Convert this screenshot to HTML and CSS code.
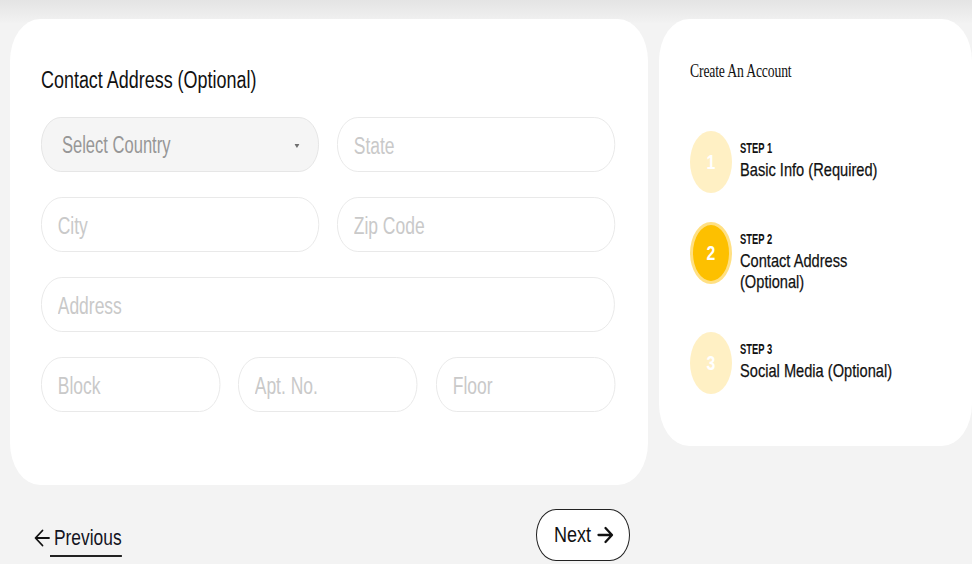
FILE: index.html
```html
<!DOCTYPE html>
<html lang="en">
<head>
<meta charset="utf-8">
<title>Contact Address</title>
<link rel="stylesheet" href="styles.css">
</head>
<body>
<div class="page">
  <div class="main-col">
    <section class="form-card">
      <h2 class="form-title">Contact Address (Optional)</h2>
      <div class="form-grid">
        <div class="row row-2">
          <div class="field select">
            <span>Select Country</span>
            <svg class="caret" width="7" height="4" viewBox="0 0 7 4"><path d="M0 0h7L3.5 4z" fill="#6f6f6f"/></svg>
          </div>
          <input class="field" type="text" placeholder="State">
        </div>
        <div class="row row-2">
          <input class="field" type="text" placeholder="City">
          <input class="field" type="text" placeholder="Zip Code">
        </div>
        <div class="row row-1">
          <input class="field" type="text" placeholder="Address">
        </div>
        <div class="row row-3">
          <input class="field" type="text" placeholder="Block">
          <input class="field" type="text" placeholder="Apt. No.">
          <input class="field" type="text" placeholder="Floor">
        </div>
      </div>
    </section>
    <nav class="wizard-nav">
      <a class="prev-link" href="#">
        <svg class="arrow" width="16" height="22" viewBox="0 0 16 22"><path d="M15 11H2M8.5 3.5L1.5 11l7 7.5" fill="none" stroke="#111" stroke-width="1.8" stroke-linecap="round" stroke-linejoin="round"/></svg>
        <span class="prev-text">Previous</span>
      </a>
      <button class="next-btn" type="button">
        <span class="next-label">Next</span>
        <svg class="arrow" width="17" height="22" viewBox="0 0 17 22"><path d="M1.5 11h13M8.5 4l6.5 7-6.5 7" fill="none" stroke="#111" stroke-width="2.3" stroke-linecap="round" stroke-linejoin="round"/></svg>
      </button>
    </nav>
  </div>
  <aside class="steps-card">
    <h3 class="steps-title">Create An Account</h3>
    <ol class="steps">
      <li class="step">
        <div class="step-dot"><span>1</span></div>
        <div class="step-text">
          <div class="step-label">STEP 1</div>
          <div class="step-name">Basic Info (Required)</div>
        </div>
      </li>
      <li class="step active">
        <div class="step-dot"><span>2</span></div>
        <div class="step-text">
          <div class="step-label">STEP 2</div>
          <div class="step-name">Contact Address (Optional)</div>
        </div>
      </li>
      <li class="step">
        <div class="step-dot"><span>3</span></div>
        <div class="step-text">
          <div class="step-label">STEP 3</div>
          <div class="step-name">Social Media (Optional)</div>
        </div>
      </li>
    </ol>
  </aside>
</div>
</body>
</html>
```

FILE: styles.css
```css
* { box-sizing: border-box; }

html, body {
  margin: 0;
  padding: 0;
}

body {
  width: 972px;
  height: 564px;
  overflow: hidden;
  background: linear-gradient(to bottom, #e4e4e4 0px, #efefef 18px, #f3f3f3 24px, #f3f3f3 100%);
  font-family: "Liberation Sans", Arial, sans-serif;
  color: #111;
}

.page {
  display: flex;
  align-items: flex-start;
  gap: 11px;
  padding: 19px 0 0 10px;
}

.main-col {
  width: 638px;
  flex: none;
}

.form-card {
  background: #fff;
  border-radius: 30px / 42px;
  padding: 47px 33px 73px 31px;
}

.form-title {
  margin: 0 0 23px;
  font-size: 23px;
  line-height: 28px;
  font-weight: 400;
  color: #111;
  transform: scaleX(0.78);
  transform-origin: left center;
}

.form-grid {
  display: flex;
  flex-direction: column;
  gap: 25px;
}

.row {
  display: grid;
  gap: 18px;
}
.row-1 { grid-template-columns: minmax(0, 1fr); }
.row-2 { grid-template-columns: repeat(2, minmax(0, 1fr)); }
.row-3 { grid-template-columns: repeat(3, minmax(0, 1fr)); }

/* fields are drawn wide and compressed horizontally, like the condensed text */
.field {
  height: 55px;
  width: calc(100% / 0.76);
  border: 1.6px solid #e6e6e6;
  border-radius: 28px;
  background: #fff;
  padding: 3px 21px 0;
  font-family: "Liberation Sans", Arial, sans-serif;
  font-size: 23px;
  color: #333;
  outline: none;
  transform: scaleX(0.76);
  transform-origin: left center;
}

.field::placeholder {
  color: #c9c9c9;
}

.select {
  display: flex;
  align-items: center;
  justify-content: space-between;
  background: #f5f5f5;
  border-color: #e2e2e2;
  padding: 2px 26px 0 28px;
  color: #979797;
  transform: scaleX(0.72);
  width: calc(100% / 0.72);
}

.caret { display: block; }

.wizard-nav {
  display: flex;
  justify-content: space-between;
  align-items: flex-end;
  margin-top: 24px;
  padding: 0 18px 0 24px;
}

.prev-link {
  display: flex;
  align-items: center;
  margin-bottom: 4px;
  color: #14141f;
  text-decoration: none;
  font-size: 22px;
}

.prev-link .arrow { display: block; margin-top: -8px; }

.prev-text {
  display: block;
  line-height: 24px;
  padding: 0 0 5px 5px;
  border-bottom: 2px solid #222;
  transform: scaleX(0.79);
  transform-origin: left center;
}

.next-btn {
  display: flex;
  align-items: center;
  gap: 6px;
  height: 52px;
  width: 94px;
  padding: 0 0 0 17px;
  border: 1.5px solid #222;
  border-radius: 20px / 26px;
  background: #fff;
  font-family: "Liberation Sans", Arial, sans-serif;
  font-size: 22px;
  color: #111;
}

.next-label {
  display: block;
  margin-right: -8px;
  transform: scaleX(0.82);
  transform-origin: left center;
}

.next-btn .arrow { display: block; }

.steps-card {
  width: 313px;
  flex: none;
  background: #fff;
  border-radius: 30px / 42px;
  padding: 42px 10px 52px 31px;
}

.steps-title {
  margin: 0 0 50px;
  font-family: "Liberation Serif", "DejaVu Serif", serif;
  font-size: 18px;
  line-height: 20px;
  font-weight: 400;
  letter-spacing: -0.2px;
  color: #111;
  transform: scaleX(0.76);
  transform-origin: left center;
}

.steps {
  list-style: none;
  margin: 0;
  padding: 0;
  display: flex;
  flex-direction: column;
  gap: 29px;
}

.step {
  display: flex;
  align-items: flex-start;
  gap: 8px;
}

.step-dot {
  width: 42px;
  height: 62px;
  flex: none;
  border-radius: 50%;
  background: #fff0c4;
  color: #fff;
  display: flex;
  align-items: center;
  justify-content: center;
  font-size: 21px;
  font-weight: 700;
}

.step-dot span {
  display: block;
  transform: scaleX(0.75);
}

.step.active .step-dot {
  background: #fdc000;
  border: 3px solid #ffe083;
}

.step-text {
  padding: 6px 0 11px;
  width: 205px;
  transform: scaleX(0.77);
  transform-origin: left center;
}

.step-label {
  font-size: 14px;
  line-height: 22px;
  font-weight: 700;
  color: #111;
  transform: scaleX(0.87);
  transform-origin: left center;
}

.step-name {
  font-size: 19px;
  line-height: 21px;
  color: #111;
  -webkit-text-stroke: 0.25px #111;
}
```
